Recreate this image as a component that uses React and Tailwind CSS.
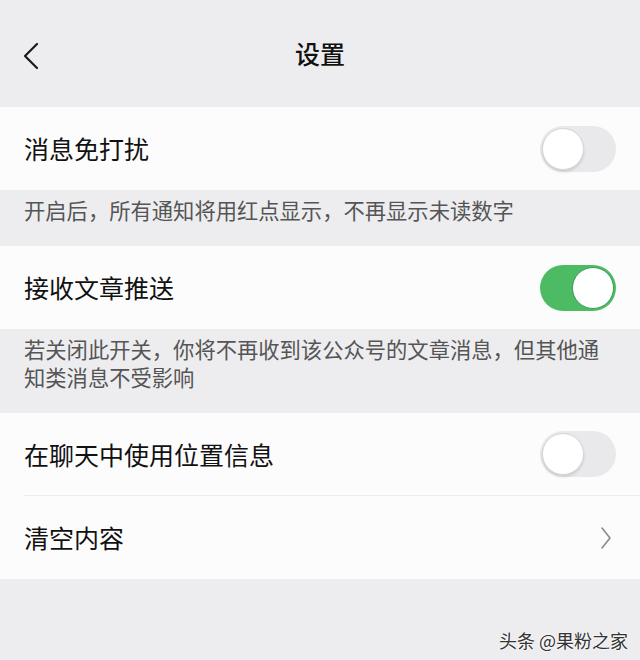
import { useState } from 'react';

const font = { fontFamily: '"Noto Sans CJK SC", "Noto Sans", sans-serif' };

const Toggle = ({ on, onChange }) => (
  <button
    onClick={onChange}
    className={`relative w-[76px] h-[46px] rounded-full flex items-center px-[2px] transition ${
      on ? 'bg-[#4dbb64] justify-end' : 'bg-[#e9e9ec] justify-start'
    }`}
  >
    <span
      className={`block w-[42px] h-[42px] rounded-full bg-white ${
        on ? 'border border-[#3f9e54]' : 'border border-[#d6d6d9] shadow-[0_2px_3px_rgba(0,0,0,0.12)]'
      }`}
    />
  </button>
);

const Row = ({ label, children, divider }) => (
  <div className="bg-[#fcfcfd]">
    <div
      className={`h-[83px] ml-[24px] pr-[24px] flex items-center justify-between ${
        divider ? 'border-b border-[#ededf0]' : ''
      }`}
    >
      <span className="text-[25px] text-[#111] leading-none">{label}</span>
      {children}
    </div>
  </div>
);

const Note = ({ children }) => (
  <div className="px-[24px] pt-[6px] pb-[22px] text-[21.3px] leading-[28px] text-[#555]">
    {children}
  </div>
);

const App = () => {
  const [mute, setMute] = useState(false);
  const [push, setPush] = useState(true);
  const [location, setLocation] = useState(false);

  return (
    <div className="w-[640px] h-[660px] bg-[#ededf0] flex flex-col relative overflow-hidden" style={font}>
      {/* Navigation bar */}
      <div className="h-[107px] flex items-center relative">
        <button className="absolute left-[18px] top-[38px] p-1">
          <svg width="18" height="28" viewBox="0 0 18 28" fill="none">
            <path d="M15 2 L3 14 L15 26" stroke="#1a1a1a" strokeWidth="2.2" strokeLinecap="round" strokeLinejoin="round" />
          </svg>
        </button>
        <h1 className="w-full text-center text-[25px] font-medium text-[#111]">设置</h1>
      </div>

      <Row label="消息免打扰">
        <Toggle on={mute} onChange={() => setMute(!mute)} />
      </Row>
      <Note>开启后，所有通知将用红点显示，不再显示未读数字</Note>

      <Row label="接收文章推送">
        <Toggle on={push} onChange={() => setPush(!push)} />
      </Row>
      <Note>若关闭此开关，你将不再收到该公众号的文章消息，但其他通知类消息不受影响</Note>

      <Row label="在聊天中使用位置信息" divider>
        <Toggle on={location} onChange={() => setLocation(!location)} />
      </Row>
      <Row label="清空内容">
        <svg width="12" height="24" viewBox="0 0 12 24" fill="none" className="mr-[4px]">
          <path d="M2 2 L10 12 L2 22" stroke="#8a8a8e" strokeWidth="1.6" strokeLinecap="round" strokeLinejoin="round" />
        </svg>
      </Row>

      {/* watermark */}
      <div className="absolute right-[12px] bottom-[6px] text-[18px] text-[#333] [text-shadow:0_0_2px_#fff,0_0_2px_#fff]">
        头条 @果粉之家
      </div>
    </div>
  );
};

export default App;
